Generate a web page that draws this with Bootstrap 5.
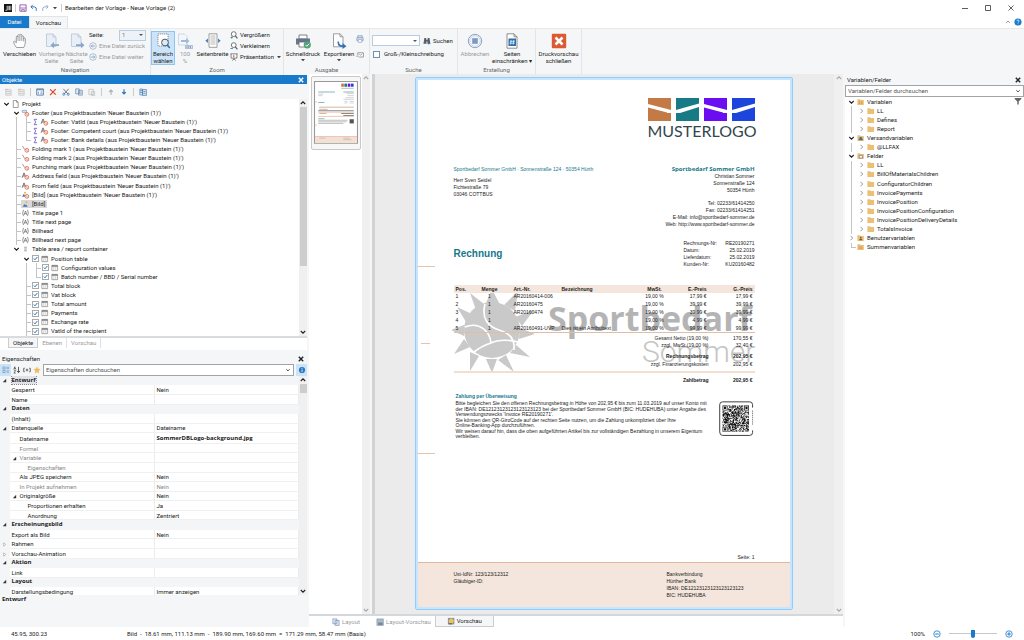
<!DOCTYPE html>
<html lang="de">
<head>
<meta charset="utf-8">
<meta name="viewport" content="width=device-width, initial-scale=1">
<title>Bearbeiten der Vorlage - Neue Vorlage (2)</title>
<link href="https://cdn.jsdelivr.net/npm/bootstrap@5.3.0/dist/css/bootstrap.min.css" rel="stylesheet">
<style>
:root{--ui:#f4f6f8;--blue:#1979ca;--line:#d5d8db;--ink:#222;--dim:#9a9a9a;--teal:#16788c;--peach:#f4e6dc}
body{font-family:Roboto,"Noto Sans",sans-serif;font-size:6px;line-height:8px;color:var(--ink);background:var(--ui)}
svg{display:block;flex:none}
i{font-style:normal}
.ic{width:8px;height:8px}
.cw{width:6px;height:6px}
button{color:inherit}
.plain{border:0;background:none;padding:0;color:inherit;text-decoration:none}
.g2{gap:2px}
.g3{gap:3px}
/* title bar and tabs */
.titlebar{height:16px;background:#fff;padding-left:4px}
.winctl{gap:17px;padding-right:10px}
.vbar{width:1px;height:8px;background:#ccc}
.tabrow{height:12px;background:#fff}
.tab-file{background:var(--blue);color:#fff;width:29px}
.tab-view{background:var(--ui);border:1px solid #e2e4e6;border-bottom:0;width:39px}
/* ribbon */
.ribbon{height:46px;border-top:1px solid #e6e8ea}
.rgroup{border-right:1px solid #e2e4e6;height:46px}
.rbody{height:37px;padding-top:2px}
.rname{color:#666;text-align:center;line-height:8px}
.rbtn{display:flex;flex-direction:column;align-items:center;border:1px solid transparent;background:none;padding:1px 0 0;height:34px;white-space:nowrap;border-radius:0}
.rbtn svg{width:16px;height:16px;margin-bottom:1px}
.rbtn svg.cw{width:6px;height:6px;margin:0}
.rbtn span{line-height:7px}
.rbtn:disabled{color:var(--dim)}
.rbtn.on{background:#cce4f9;border-color:#90c4ee}
.rlist{display:flex;flex-direction:column;gap:3px}
.rlist button,.rlist div{height:8px;display:flex;align-items:center;gap:2px;white-space:nowrap}
.off{color:var(--dim)}
.combo{appearance:none;border:1px solid #b8cde0;background:#fff url("data:image/svg+xml,%3Csvg xmlns='http://www.w3.org/2000/svg' width='6' height='4'%3E%3Cpath d='M1 1h4L3 3z' fill='%23555'/%3E%3C/svg%3E") no-repeat right 1px center;font-size:6px;line-height:8px;padding:0 2px;height:11px;border-radius:0;color:var(--ink)}
.combo:disabled{background-color:#edf2f8;color:#777;opacity:1}
.tick{appearance:none;width:7px;height:7px;margin:0 1px;border:1px solid #6d8fb0;background:#fff;flex:none}
.tree .tick{border-color:#aaa}
.tick:checked{background:#fff url("data:image/svg+xml,%3Csvg xmlns='http://www.w3.org/2000/svg' viewBox='0 0 5 5'%3E%3Cpath d='M.8 2.5l1.2 1.3L4.3 1' fill='none' stroke='%231979ca'/%3E%3C/svg%3E")}
/* docked panels */
.left{width:307px;margin-right:2px}
.right{width:179px;margin-left:2px}
.phead{height:11px;padding:0 2px}
.phead.act{background:var(--blue);color:#fff;margin-top:1px;height:9px}
.tools{height:15px;padding-left:4px;gap:5px}
.sbar{width:8px;background:#f0f0f0;display:flex;flex-direction:column;align-items:center;flex:none}
.sbar svg{width:8px;height:8px}
.sbar.pale{color:#aaa}
.thumb-h{width:7px;background:#cdcdcd}
.tree{margin:0;padding:0 0 0 1px;list-style:none;display:grid;grid-auto-rows:1fr}
.tree li{display:flex;align-items:stretch;white-space:nowrap}
.tree li>*{align-self:center}
.tree li>i{width:10px;align-self:stretch;position:relative;display:flex;align-items:center;justify-content:center}
.tree .v::before,.tree .t::before,.tree .e::before{content:"";position:absolute;left:5px;top:0;bottom:0;border-left:1px solid #c4c4c4}
.tree .e::before{bottom:50%}
.tree .t::after,.tree .e::after{content:"";position:absolute;left:5px;right:0;top:50%;border-top:1px solid #c4c4c4}
.tree .ic{width:9px;height:8px}
.tree span{padding:0 1px;margin-left:1px}
.tree .sel{background:#d9d9d9}
.ptabs{height:14px;background:#fff;border-top:2px solid #d9dcdf;padding-left:8px;padding-bottom:2px}
.ptabs button{border-right:1px solid #bbb;padding:0 4px;color:var(--dim)}
.ptabs button.on{background:var(--ui);color:var(--ink);border:1px solid #c9ccd0;border-top:0}
.find{border:1px solid #a0a4a8;background:#fff;height:12px;padding:0 2px}
.find input{border:0;outline:0;padding:0;min-width:0;font-size:6px;line-height:8px;background:none}
.find input::placeholder{color:#555}
.hot{background:#cce4f9}
.props{height:221px;border-collapse:collapse;background:#fff;table-layout:fixed}
.props th,.props td{padding:0 0 0 2px;font-weight:400;line-height:7px;border-bottom:1px solid #f0f0f0;border-right:1px solid #ececec;white-space:nowrap}
.props th:first-child,.props tr.cat th{background:#f3f5f7;border-color:#f3f5f7;font-weight:700}
.props svg{width:5px;height:5px;display:inline-block;vertical-align:middle}
.props b,.props .cat th,.heavy{font-family:"Open Sans",sans-serif}
.cur{outline:1px dotted #888;background:#dfe3e8}
.in1{padding-left:10px!important}.in2{padding-left:18px!important}
.neg{margin-left:-8px;margin-right:3px}
.gray{color:#888}
/* preview */
.strip{width:53px;background:#fff}
.tcard{border:1px solid #c8c8c8;border-radius:2px;background:#f7f7f7;margin:2px 1px 0 2px;padding:4px 2px 5px}
.canvas{background:#ebebeb;padding:3px 2px 4px 0;border-left:3px solid #d2d2d2}
.paper{width:378px;background:#fff;border:1px solid #8fccff;box-shadow:inset 0 0 0 2px #c6e5ff;border-radius:2px;padding:2px;position:relative;font:5px/7px "Liberation Sans",sans-serif;color:#222;display:flex;flex-direction:column}
.pin{padding:0 35px 0 36px;position:relative}
.brand{width:107px}
.brand b{display:block;font:400 16px/16px Lato,sans-serif;color:#33474d;margin-top:2px}
.teal{color:var(--teal)}
.h-inv{font-size:10px;line-height:12px;color:var(--teal);font-weight:700}
.co{font:700 6px/8px "Open Sans",sans-serif;color:var(--teal)}
.pos{width:100%;height:48px;table-layout:fixed;border-bottom:1px solid #e0bda4}
.pos th{background:var(--peach);height:8px}
.pos th,.pos td{padding:0 2px;line-height:7px;white-space:nowrap}
.sum td{padding:0 2px;line-height:7px;text-align:right}
.sum .gap td{padding-top:4px}
.sum .last td{padding:1px 2px 3px}
.water{position:absolute;left:34px;top:210px;width:306px;height:90px}
.foldmark{position:absolute;height:1px;background:#e8c3aa;left:1px;width:18px}
.pay{display:grid;grid-auto-rows:1fr;height:39px;width:254px;line-height:5px;white-space:nowrap}
.pfoot{background:var(--peach);border-top:1px solid #e0b79b;height:45px;padding:8px 35px 0 36px;margin-top:1px}
.dtabs{height:13px;background:#fff;border-top:2px solid #d5d8db}
.dtabs button{display:flex;align-items:center;gap:2px;color:var(--dim)}
.dtabs button.on{background:var(--ui);border:1px solid #c9ccd0;border-top:0;color:var(--ink);width:59px;justify-content:center}
.status{height:13px;background:#fff}
.zoomer{appearance:none;width:48px;height:8px;background:linear-gradient(#c8c8c8,#c8c8c8) center/100% 1px no-repeat}
.zoomer::-webkit-slider-thumb{appearance:none;width:4px;height:8px;background:var(--blue);border-radius:0 0 2px 2px}
</style>
</head>
<body class="vh-100 d-flex flex-column overflow-hidden">
<svg width="0" height="0" class="position-absolute" aria-hidden="true">
<defs>
<symbol id="x" viewBox="0 0 8 8"><path d="M1.8 1.8l4.4 4.4M6.2 1.8L1.8 6.2" stroke="currentColor" stroke-width="1.4"/></symbol>
<symbol id="dn" viewBox="0 0 8 8"><path d="M1.8 3L4 5.2 6.200 3" fill="none" stroke="currentColor" stroke-width="1.1"/></symbol>
<symbol id="up" viewBox="0 0 8 8"><path d="M1.800 5L4 2.800 6.200 5" fill="none" stroke="currentColor" stroke-width="1.1"/></symbol>
<symbol id="rt" viewBox="0 0 8 8"><path d="M3 1.800L5.200 4 3 6.200" fill="none" stroke="#999" stroke-width="1"/></symbol>
<symbol id="tri" viewBox="0 0 6 6"><path d="M5 1v4H1z" fill="#333"/></symbol>
<symbol id="tro" viewBox="0 0 6 6"><path d="M2 1l2.500 2L2 5z" fill="#fff" stroke="#999" stroke-width=".7"/></symbol>
<symbol id="car" viewBox="0 0 6 6"><path d="M1 2h4L3 4.300z" fill="#444"/></symbol>
<symbol id="page" viewBox="0 0 9 9"><path d="M2 .5h3.500l2 2v6H2zM5.500.5v2h2" fill="#fff" stroke="#777" stroke-width=".8"/></symbol>
<symbol id="foot" viewBox="0 0 9 9"><path d="M.8 3.800V1.500h5v2.300z" fill="#dbe8f5" stroke="#6a93c0" stroke-width=".7"/><circle cx="6" cy="6" r="2.100" fill="#fff" stroke="#dc5a3c" stroke-width=".9"/><path d="M4.600 4.600l2.800 2.800" stroke="#dc5a3c" stroke-width=".8"/></symbol>
<symbol id="lnk" viewBox="0 0 9 9"><path d="M1 1l2.500 4" stroke="#777" stroke-width=".8"/><circle cx="6" cy="6" r="2.100" fill="#fff" stroke="#dc5a3c" stroke-width=".9"/><path d="M4.600 4.600l2.800 2.800" stroke="#dc5a3c" stroke-width=".8"/></symbol>
<symbol id="txt" viewBox="0 0 9 9"><path d="M.7 6.500L2.800 1l1.700 4M1.600 4.500h2.400" fill="none" stroke="#444" stroke-width=".8"/><circle cx="6" cy="6" r="2.100" fill="#fff" stroke="#dc5a3c" stroke-width=".9"/><path d="M4.600 4.600l2.800 2.800" stroke="#dc5a3c" stroke-width=".8"/></symbol>
<symbol id="pic" viewBox="0 0 9 9"><circle cx="5.500" cy="2.500" r="1.200" fill="#f2b33d"/><path d="M1.500 7.500l1.700-3 1.300 1.500.8-.8 1.700 2.300z" fill="#3d78bd"/></symbol>
<symbol id="picl" viewBox="0 0 9 9"><circle cx="4" cy="2" r="1.200" fill="#f2b33d"/><path d="M.6 6.500l2-3.500 2 3.500z" fill="#3d78bd"/><circle cx="6" cy="6" r="2.100" fill="#fff" stroke="#dc5a3c" stroke-width=".9"/><path d="M4.600 4.600l2.800 2.800" stroke="#dc5a3c" stroke-width=".8"/></symbol>
<symbol id="sum" viewBox="0 0 9 9"><path d="M6.300 1.500H3L4.700 4.500 3 7.500h3.300" fill="none" stroke="#6d62c9" stroke-width="1"/></symbol>
<symbol id="cond" viewBox="0 0 9 9"><path d="M2.300 1Q.3 4.500 2.300 8M6.700 1q2 3.500 0 7M2.900 6.700l1.600-4.400 1.600 4.400M3.500 5.300h2" fill="none" stroke="#555" stroke-width=".7"/></symbol>
<symbol id="rep" viewBox="0 0 9 9"><path d="M3 2.500h3M3 4.500h3M3 6.500h3" stroke="#888" stroke-width=".9"/></symbol>
<symbol id="tab" viewBox="0 0 9 9"><path d="M1.500 1.500h6.500v6H1.500z" fill="#fff" stroke="#888" stroke-width=".8"/><path d="M1.500 2.300h6.500" stroke="#777" stroke-width="1.600"/><path d="M3.700 2.500v5M5.900 2.500v5" stroke="#aaa" stroke-width=".6"/></symbol>
<symbol id="fold" viewBox="0 0 9 9"><path d="M1 1.500h3l.8.800H8.500V8H1z" fill="#ecbf77"/></symbol>
<symbol id="foldv" viewBox="0 0 9 9"><path d="M1 1.500h3l.8.800H8.200V7.800H1z" fill="#ecbf77"/><path d="M2.500 4.500h1.500M5 4.500h1.500M2.500 6h1.500M5 6h1.500" stroke="#c07f2c" stroke-width=".7"/></symbol>
<symbol id="foldm" viewBox="0 0 9 9"><path d="M1 1.500h3l.8.800H8.200V7.800H1z" fill="#ecbf77"/><path d="M2.500 5h4.500v2H2.500zM3.500 3.500h2.500V5H3.500z" fill="#526f93"/></symbol>
<symbol id="foldf" viewBox="0 0 9 9"><path d="M1 1.500h3l.8.800H8.200V7.800H1z" fill="#ecbf77"/><path d="M3 3.800h3.800v3H3z" fill="#fff" stroke="#5b6d80" stroke-width=".7"/></symbol>
<symbol id="foldu" viewBox="0 0 9 9"><path d="M1 1.500h3l.8.800H8.200V7.800H1z" fill="#ecbf77"/><circle cx="4.800" cy="4" r=".9" fill="#6b5a45"/><path d="M3.200 7c0-2.500 3.200-2.500 3.200 0z" fill="#6b5a45"/></symbol>
<symbol id="hand" viewBox="0 0 16 16"><path d="M4.500 14.500C3 12.500 1.500 10 1.700 8.600c1-.9 2 .2 2.600 1.300V4c0-1.200 1.700-1.200 1.700 0V2.600c0-1.300 1.900-1.300 1.900 0V2c.2-1.100 1.800-1 1.900.2V3.500c.3-1 1.800-.9 1.900.3v1.800c.4-.8 1.700-.6 1.700.5 0 4.500-.3 6-1.700 8.400zM6 4v4M7.900 3v5M9.800 3.500V8M11.700 5v3.500" fill="#fff" stroke="#777" stroke-width=".7"/></symbol>
<symbol id="pgp" viewBox="0 0 16 16"><path d="M2.500 1h6.500l3 3v9.500h-9.500z" fill="#e9eff7" stroke="#b4c4d8" stroke-width=".8"/><path d="M9 1v3h3" fill="none" stroke="#b4c4d8" stroke-width=".8"/><path d="M15 11.300h-5V9L6.500 12.200 10 15.300v-2.200h5z" fill="#8aa6ca"/></symbol>
<symbol id="pgn" viewBox="0 0 16 16"><path d="M2.500 1h6.500l3 3v9.500h-9.500z" fill="#e9eff7" stroke="#b4c4d8" stroke-width=".8"/><path d="M9 1v3h3" fill="none" stroke="#b4c4d8" stroke-width=".8"/><path d="M7 11.300h5V9l3.500 3.200L12 15.300v-2.200H7z" fill="#8aa6ca"/></symbol>
<symbol id="cl" viewBox="0 0 8 8"><circle cx="4" cy="4" r="3.300" fill="#f3f6fa" stroke="#94a9c4" stroke-width=".7"/><path d="M6 4H2.300M3.700 2.500L2.200 4l1.500 1.500" fill="none" stroke="#7f9bc0" stroke-width=".8"/></symbol>
<symbol id="cr" viewBox="0 0 8 8"><circle cx="4" cy="4" r="3.300" fill="#f3f6fa" stroke="#94a9c4" stroke-width=".7"/><path d="M2 4h3.700M4.300 2.500L5.800 4 4.300 5.500" fill="none" stroke="#7f9bc0" stroke-width=".8"/></symbol>
<symbol id="area" viewBox="0 0 16 16"><path d="M3 1h10v12H3z" fill="#fff" stroke="#666" stroke-width=".7" stroke-dasharray="1.200 .8"/><circle cx="10" cy="9.500" r="3.400" fill="#d9ecfb" stroke="#555" stroke-width="1"/><path d="M12.300 12l2.500 3" stroke="#3c6ea8" stroke-width="1.500"/></symbol>
<symbol id="z100" viewBox="0 0 16 16"><path d="M1.500 1h6l3 3v8h-9z" fill="#f3f7fb" stroke="#b4c4d8" stroke-width=".8" stroke-dasharray="1.500 .6"/><path d="M4 7h5V5l3.500 3L9 11V9H4z" fill="#a3bbd9"/><path d="M8.500 12.500h7v3h-7z" fill="#dfe8f2" stroke="#8aa0bf" stroke-width=".6"/><path d="M9.500 14h5" stroke="#6d83a8" stroke-width="1.300" stroke-dasharray="1 .8"/></symbol>
<symbol id="pgw" viewBox="0 0 16 16"><path d="M4 .8h8v13.500H4z" fill="#fff" stroke="#888" stroke-width=".8"/><path d="M5.500 3h5M5.500 5h5M5.500 7h5M5.500 9h5M5.500 11h5" stroke="#999" stroke-width=".7"/><path d="M3 5.500L.3 7.700 3 10zM13 5.500l2.700 2.200L13 10z" fill="#4a82c0"/></symbol>
<symbol id="mag" viewBox="0 0 9 9"><circle cx="4.200" cy="3.500" r="2.700" fill="#fff" stroke="#555" stroke-width=".9"/><path d="M6 5.500l2.300 2.800" stroke="#555" stroke-width="1.200"/><path d="M.5 7.300h2.800M1.900 6v2.700" stroke="#3a9a5c" stroke-width=".9"/></symbol>
<symbol id="mag2" viewBox="0 0 9 9"><circle cx="4.200" cy="3.500" r="2.700" fill="#fff" stroke="#555" stroke-width=".9"/><path d="M6 5.500l2.300 2.800" stroke="#555" stroke-width="1.200"/><path d="M.5 7.300h2.800" stroke="#3a78bd" stroke-width="1"/></symbol>
<symbol id="prs" viewBox="0 0 9 9"><path d="M.5 1h8M1.200 1v4.700h6.600V1M4.500 5.700v1.200M2.500 8.500l2-1.700 2 1.700" fill="#fff" stroke="#555" stroke-width=".8"/><path d="M3.500 2.200l2.200 1.200-2.200 1.300z" fill="#d2553d"/></symbol>
<symbol id="prn" viewBox="0 0 16 16"><path d="M4 2h8v4H4z" fill="#fff" stroke="#666" stroke-width=".8"/><path d="M1 5.500h14v6H1z" fill="#70767e"/><path d="M4 9h8v5H4z" fill="#fff" stroke="#666" stroke-width=".8"/><path d="M2.500 7h11" stroke="#3f76b4"/><circle cx="12.300" cy="11.800" r="3.600" fill="#54a078"/><path d="M10.500 11.900l1.400 1.400 2.400-2.700" fill="none" stroke="#fff"/></symbol>
<symbol id="exp" viewBox="0 0 16 16"><path d="M2.500.8h6.500l3 3v10h-9.500zM9 .8v3h3" fill="#fff" stroke="#888" stroke-width=".8"/><path d="M8 8.500c0 2.700 1 3.700 3.500 3.700V10l4 3.200-4 2.800v-2c-3.500 0-5-1.500-5-5.500z" fill="#3872b5"/></symbol>
<symbol id="prs2" viewBox="0 0 9 9"><path d="M2 3V.8h5V3M1 3h7v3.500H1z" fill="#dbe4ee" stroke="#7f97b8" stroke-width=".8"/><path d="M2.500 5h4v3.200h-4z" fill="#fff" stroke="#7f97b8" stroke-width=".7"/></symbol>
<symbol id="snd" viewBox="0 0 9 9"><path d="M2 2h6.300v4.800H3.500M2 2v2.500" fill="#fff" stroke="#777" stroke-width=".8"/><path d="M3.500 3.500l1.700 1.200 1.700-1.200M.3 5.800h3" fill="none" stroke="#777" stroke-width=".7"/></symbol>
<symbol id="bino" viewBox="0 0 9 9"><path d="M1.500 1.200h2l.5 6.300H.5zM5.300 1.200h2l1 6.300H4.800zM3.500 3h2v2h-2z" fill="#5a5f66"/><path d="M6 5.500l2.500 1.500L6 8.700z" fill="#3a78bd"/></symbol>
<symbol id="stop" viewBox="0 0 16 16"><circle cx="8" cy="8" r="6.700" fill="#f2f5f9" stroke="#8ba3c4" stroke-width="1"/><circle cx="8" cy="8" r="5.300" fill="none" stroke="#c3d0e0" stroke-width=".8"/><path d="M5.200 5.200h5.600v5.600H5.200z" fill="#7d99c2"/></symbol>
<symbol id="num" viewBox="0 0 16 16"><path d="M3 .8h7l3 3v11.400H3zM10 .8v3h3" fill="#fff" stroke="#777" stroke-width=".8"/><path d="M4.500 5.500h7.500v7.500H4.500z" fill="#2f6fad"/><path d="M7.200 7l-.6 4.500M9.800 7l-.6 4.500M5.800 8.300h5M5.600 10.200h5" stroke="#fff" stroke-width=".7"/></symbol>
<symbol id="close" viewBox="0 0 16 16"><rect x=".8" y=".8" width="14.400" height="14.400" rx="1" fill="#dc5a32"/><path d="M4.500 4.500l7 7M11.500 4.500l-7 7" stroke="#fff" stroke-width="2.600"/></symbol>
<symbol id="logo" viewBox="0 0 9 9"><path d="M0 0h9v9H0z" fill="#111"/><path d="M1.500 7h2V2M4.700 2v5M6.200 2v5M7.700 2v5" fill="none" stroke="#fff" stroke-width=".8"/></symbol>
<symbol id="save" viewBox="0 0 9 9"><path d="M1 1h7v7.200H1z" fill="#fff" stroke="#8d54a8" stroke-width="1"/><path d="M1 4.500h7M3 8V6.300h3V8" fill="none" stroke="#8d54a8" stroke-width=".9"/></symbol>
<symbol id="undo" viewBox="0 0 9 9"><path d="M3 1L1 3.300l2.200 2M1.300 3.200H5q3 .3 2 4.500" fill="none" stroke="#3a72b8" stroke-width="1.100"/></symbol>
<symbol id="redo" viewBox="0 0 9 9"><path d="M6 1l2 2.300-2.200 2M7.700 3.200H4Q1 3.500 2 7.700" fill="none" stroke="#92aece" stroke-width="1.100"/></symbol>
<symbol id="gri" viewBox="0 0 9 9"><path d="M2 2h6v6H2z" fill="#f5f5f5" stroke="#bbb" stroke-width=".8"/><path d="M2.500 4h5M2.500 6h5M1 1.500h4" stroke="#bbb" stroke-width=".8"/></symbol>
<symbol id="prop" viewBox="0 0 9 9"><path d="M.8 1h7.500v7H.8z" fill="#fff" stroke="#4a6f99" stroke-width=".9"/><path d="M1 2h7" stroke="#4a6f99"/><path d="M2.500 4v3M5 4.500h2.200M5 6.500h2.200" stroke="#4a82c0" stroke-width=".9"/></symbol>
<symbol id="del" viewBox="0 0 9 9"><path d="M1.200 1.500l6.500 6M7.500 1.200L1.200 8" stroke="#df4526" stroke-width="1.400"/></symbol>
<symbol id="cut" viewBox="0 0 9 9"><path d="M1.500 1l5 5.500M7.500 1l-5 5.500" stroke="#555" stroke-width=".9"/><circle cx="2" cy="7" r="1.200" fill="none" stroke="#3a78bd" stroke-width=".9"/><circle cx="7" cy="7" r="1.200" fill="none" stroke="#3a78bd" stroke-width=".9"/></symbol>
<symbol id="copy" viewBox="0 0 9 9"><path d="M.8 1h4v5.500h-4zM4 2.500h4.200V8H4z" fill="#e4edf6" stroke="#6584a8" stroke-width=".8"/><path d="M5 4.500h2.200M5 6h2.200" stroke="#6584a8" stroke-width=".6"/></symbol>
<symbol id="sync" viewBox="0 0 9 9"><path d="M1 1.200h3v6.600H1zM4 1.800h4.300v6.500H4z" fill="#e4edf6" stroke="#4a7cb0" stroke-width=".8"/><path d="M5 4h2.300M5 6h2.300M1.500 3h2M1.500 5h2" stroke="#3a78bd" stroke-width=".8"/></symbol>
<symbol id="paste" viewBox="0 0 9 9"><path d="M1 1.500h5v6H1zM4 4h3.500v4.300H4z" fill="#f3f3f3" stroke="#bbb" stroke-width=".8"/></symbol>
<symbol id="aup" viewBox="0 0 9 9"><path d="M4.500 7.500V3M2.500 4.300l2-2 2 2" fill="none" stroke="#aaa" stroke-width="1.200"/></symbol>
<symbol id="adn" viewBox="0 0 9 9"><path d="M4.500 1.500V6M2.500 4.700l2 2 2-2" fill="none" stroke="#2c72b8" stroke-width="1.300"/></symbol>
<symbol id="star" viewBox="0 0 9 9"><path d="M4.500.5l1.200 2.700 2.900.3-2.200 2 .6 2.900-2.500-1.500L2 8.400l.6-2.900-2.200-2 2.900-.3z" fill="#f0bb5a"/></symbol>
<symbol id="cat" viewBox="0 0 9 9"><path d="M1 1h2.500v2.500H1zM1 5h2.500v2.500H1zM5 1.500h3M5 3h3M5 5.500h3M5 7h3" fill="none" stroke="#6f8dac" stroke-width=".7"/></symbol>
<symbol id="az" viewBox="0 0 9 9"><path d="M.8 4l1.200-3.200L3.200 4M1.200 3h1.600M1 5.200h2L1 8h2.200" fill="none" stroke="#333" stroke-width=".7"/><path d="M6.200 1v6M4.500 5.500l1.700 2 1.700-2" fill="none" stroke="#333" stroke-width=".9"/></symbol>
<symbol id="plus" viewBox="0 0 9 9"><path d="M2 2.500H.8v4H2M7 2.500h1.200v4H7M4.500 3v3M3 4.500h3" fill="none" stroke="#333" stroke-width=".8"/></symbol>
<symbol id="info" viewBox="0 0 9 9"><circle cx="4.500" cy="4.500" r="3.500" fill="#2d78be"/><path d="M4.500 4v2.800M4.500 2.200v1" stroke="#fff" stroke-width=".9"/></symbol>
<symbol id="help" viewBox="0 0 9 9"><circle cx="4.500" cy="4.500" r="4" fill="#1979ca"/><path d="M3.200 3.500q.1-1.300 1.300-1.300t1.300 1.100q0 .7-.8 1.100t-.5.900M4.500 6.100v.8" fill="none" stroke="#fff" stroke-width=".8"/></symbol>
<symbol id="fil" viewBox="0 0 9 9"><path d="M.8 1h7.400v1.200L5.300 5v3.500H3.700V5L.8 2.200z" fill="#666"/></symbol>
<symbol id="lay" viewBox="0 0 9 9"><path d="M1 1h4.500v5.500H1zM3.500 2.800H8v5.500H3.500z" fill="#e3edf8" stroke="#7b93b3" stroke-width=".8"/></symbol>
<symbol id="sv" viewBox="0 0 9 9"><path d="M1 1h7.300v7.300H1z" fill="#a9bccd" stroke="#7a8b9c" stroke-width=".6"/><path d="M2.500 5h5v3h-5z" fill="#7c8792"/></symbol>
<symbol id="sva" viewBox="0 0 9 9"><path d="M1 1h7.300v7.300H1z" fill="#8796a3"/><path d="M2 3.500L5 1.500l3 2.500-2 4-3.500-.8z" fill="#efc34e"/><path d="M2 7h4v1.300H2z" fill="#55616c"/></symbol>
<symbol id="zm" viewBox="0 0 9 9"><circle cx="4.500" cy="4.500" r="3.600" fill="#fff" stroke="#1979ca" stroke-width=".9"/><path d="M2.500 4.500h4" stroke="#1979ca" stroke-width="1.100"/></symbol>
<symbol id="zp" viewBox="0 0 9 9"><circle cx="4.500" cy="4.500" r="3.600" fill="#fff" stroke="#1979ca" stroke-width=".9"/><path d="M2.500 4.500h4M4.500 2.500v4" stroke="#1979ca" stroke-width="1.100"/></symbol>
<symbol id="mark" viewBox="0 0 107 23"><path d="M0 0h23v12L0 6z" fill="#c47a45"/><path d="M0 9.500L19 14.500V15h4v8H0z" fill="#c47a45"/><path d="M28 0h23v5.500l-23 6.500z" fill="#177a84"/><path d="M28 15h4l19-6v14H28z" fill="#177a84"/><path d="M56 0h23v12L56 6z" fill="#6a0df0"/><path d="M56 9.500l19 5V15h4v8H56z" fill="#6a0df0"/><path d="M84 0h23v5.500L84 12z" fill="#1c45dc"/><path d="M84 15h4l19-6v14H84z" fill="#1c45dc"/></symbol>
</defs>
</svg>

<header>
<div class="titlebar d-flex align-items-center g3">
  <svg class="ic"><use href="#logo"/></svg><i class="vbar"></i>
  <button class="plain" aria-label="Speichern"><svg class="ic"><use href="#save"/></svg></button>
  <button class="plain" aria-label="Rückgängig"><svg class="ic"><use href="#undo"/></svg></button>
  <button class="plain" aria-label="Wiederholen"><svg class="ic"><use href="#redo"/></svg></button>
  <button class="plain" aria-label="Mehr"><svg class="cw"><use href="#car"/></svg></button>
  <i class="vbar"></i><span>Bearbeiten der Vorlage - Neue Vorlage (2)</span>
  <div class="winctl ms-auto d-flex">
    <button class="plain" aria-label="Minimieren"><svg class="cw" viewBox="0 0 6 6"><path d="M0 3.500h6" stroke="#333" stroke-width=".8"/></svg></button>
    <button class="plain" aria-label="Maximieren"><svg class="cw" viewBox="0 0 6 6"><path d="M.5.500h5v5h-5z" fill="none" stroke="#333" stroke-width=".8"/></svg></button>
    <button class="plain" aria-label="Schließen"><svg class="cw" viewBox="0 0 6 6"><path d="M.5.500l5 5M5.500.500l-5 5" stroke="#333" stroke-width=".8"/></svg></button>
  </div>
</div>
<nav class="tabrow d-flex align-items-stretch">
  <button class="plain tab-file text-white">Datei</button><button class="plain tab-view">Vorschau</button>
  <div class="ms-auto d-flex align-items-center g3" style="padding-right:2px"><svg class="cw text-secondary"><use href="#up"/></svg><a href="#hilfe" aria-label="Hilfe"><svg class="ic"><use href="#help"/></svg></a></div>
</nav>
<div class="ribbon d-flex">
  <section class="rgroup" style="width:151px"><div class="rbody d-flex">
    <button class="rbtn" style="width:39px"><svg><use href="#hand"/></svg><span>Verschieben</span></button>
    <button class="rbtn" style="width:25px" disabled><svg><use href="#pgp"/></svg><span>Vorherige<br>Seite</span></button>
    <button class="rbtn" style="width:25px" disabled><svg><use href="#pgn"/></svg><span>Nächste<br>Seite</span></button>
    <div class="rlist flex-fill">
      <div class="justify-content-between pe-1"><label for="pg">Seite:</label><select id="pg" class="combo" style="width:27px" disabled><option>1</option></select></div>
      <button class="plain off" disabled><svg class="ic"><use href="#cl"/></svg>Eine Datei zurück</button>
      <button class="plain off" disabled><svg class="ic"><use href="#cr"/></svg>Eine Datei weiter</button>
    </div></div><div class="rname">Navigation</div></section>
  <section class="rgroup" style="width:133px"><div class="rbody d-flex">
    <button class="rbtn on" style="width:24px"><svg><use href="#area"/></svg><span>Bereich<br>wählen</span></button>
    <button class="rbtn" style="width:20px" disabled><svg><use href="#z100"/></svg><span>100<br>%</span></button>
    <button class="rbtn" style="width:35px"><svg><use href="#pgw"/></svg><span>Seitenbreite</span></button>
    <div class="rlist">
      <button class="plain"><svg class="ic"><use href="#mag"/></svg>Vergrößern</button>
      <button class="plain"><svg class="ic"><use href="#mag2"/></svg>Verkleinern</button>
      <button class="plain"><svg class="ic"><use href="#prs"/></svg>Präsentation<svg class="cw"><use href="#car"/></svg></button>
    </div></div><div class="rname">Zoom</div></section>
  <section class="rgroup" style="width:86px"><div class="rbody d-flex">
    <button class="rbtn" style="width:38px"><svg><use href="#prn"/></svg><span>Schnelldruck</span><svg class="cw"><use href="#car"/></svg></button>
    <button class="rbtn" style="width:34px"><svg><use href="#exp"/></svg><span>Exportieren</span><svg class="cw"><use href="#car"/></svg></button>
    <div class="d-flex flex-column gap-2 pt-1">
      <button class="plain" aria-label="Drucken"><svg class="ic"><use href="#prs2"/></svg></button>
      <button class="plain" aria-label="Senden"><svg class="ic"><use href="#snd"/></svg></button>
    </div></div><div class="rname">Ausgabe</div></section>
  <section class="rgroup" style="width:88px"><div class="rbody" style="padding-left:2px">
    <div class="d-flex align-items-center g3 pt-1"><select class="combo" style="width:48px" aria-label="Suchbegriff"><option></option></select><button class="plain d-flex g2"><svg class="ic"><use href="#bino"/></svg>Suchen</button></div>
    <div class="d-flex align-items-center g3 pt-1"><input class="tick" type="checkbox" id="cs"><label for="cs" class="text-nowrap">Groß-/Kleinschreibung</label></div>
    </div><div class="rname">Suche</div></section>
  <section class="rgroup" style="width:78px"><div class="rbody d-flex">
    <button class="rbtn" style="width:34px" disabled><svg><use href="#stop"/></svg><span>Abbrechen</span></button>
    <button class="rbtn" style="width:40px"><svg><use href="#num"/></svg><span>Seiten<br>einschränken ▾</span></button>
    </div><div class="rname">Erstellung</div></section>
  <section class="rgroup" style="width:46px"><div class="rbody">
    <button class="rbtn w-100"><svg><use href="#close"/></svg><span>Druckvorschau<br>schließen</span></button></div></section>
</div>
</header>

<main class="d-flex flex-fill overflow-hidden">
<aside class="left d-flex flex-column flex-shrink-0">
  <div class="phead act d-flex align-items-center justify-content-between"><span>Objekte</span><button class="plain" aria-label="Objekte schließen"><svg class="ic"><use href="#x"/></svg></button></div>
  <div class="tools d-flex align-items-center">
    <svg class="ic"><use href="#gri"/></svg><svg class="ic"><use href="#gri"/></svg><i class="vbar"></i>
    <svg class="ic"><use href="#prop"/></svg><svg class="ic"><use href="#del"/></svg><svg class="ic"><use href="#cut"/></svg><svg class="ic"><use href="#copy"/></svg><svg class="ic"><use href="#paste"/></svg><i class="vbar"></i>
    <svg class="ic"><use href="#aup"/></svg><svg class="ic"><use href="#adn"/></svg><i class="vbar"></i><svg class="ic"><use href="#sync"/></svg>
  </div>
  <div class="d-flex flex-fill bg-white">
    <ul class="tree flex-fill">
      <li><i><svg class="ic"><use href="#dn"/></svg></i><svg class="ic"><use href="#page"/></svg><span>Projekt</span></li>
      <li><i></i><i><svg class="ic"><use href="#dn"/></svg></i><svg class="ic"><use href="#foot"/></svg><span>Footer (aus Projektbaustein 'Neuer Baustein (1)')</span></li>
      <li><i></i><i class="v"></i><i class="t"></i><svg class="ic"><use href="#sum"/></svg><svg class="ic"><use href="#txt"/></svg><span>Footer: VatId (aus Projektbaustein 'Neuer Baustein (1)')</span></li>
      <li><i></i><i class="v"></i><i class="t"></i><svg class="ic"><use href="#sum"/></svg><svg class="ic"><use href="#txt"/></svg><span>Footer: Competent court (aus Projektbaustein 'Neuer Baustein (1)')</span></li>
      <li><i></i><i class="v"></i><i class="e"></i><svg class="ic"><use href="#sum"/></svg><svg class="ic"><use href="#txt"/></svg><span>Footer: Bank details (aus Projektbaustein 'Neuer Baustein (1)')</span></li>
      <li><i></i><i class="t"></i><svg class="ic"><use href="#lnk"/></svg><span>Folding mark 1 (aus Projektbaustein 'Neuer Baustein (1)')</span></li>
      <li><i></i><i class="t"></i><svg class="ic"><use href="#lnk"/></svg><span>Folding mark 2 (aus Projektbaustein 'Neuer Baustein (1)')</span></li>
      <li><i></i><i class="t"></i><svg class="ic"><use href="#lnk"/></svg><span>Punching mark (aus Projektbaustein 'Neuer Baustein (1)')</span></li>
      <li><i></i><i class="t"></i><svg class="ic"><use href="#txt"/></svg><span>Address field (aus Projektbaustein 'Neuer Baustein (1)')</span></li>
      <li><i></i><i class="t"></i><svg class="ic"><use href="#txt"/></svg><span>From field (aus Projektbaustein 'Neuer Baustein (1)')</span></li>
      <li><i></i><i class="t"></i><svg class="ic"><use href="#picl"/></svg><span>[Bild] (aus Projektbaustein 'Neuer Baustein (1)')</span></li>
      <li><i></i><i class="t"></i><svg class="ic sel"><use href="#pic"/></svg><span class="sel ms-0" style="padding:0 2px">[Bild]</span></li>
      <li><i></i><i class="t"></i><svg class="ic"><use href="#cond"/></svg><span>Title page 1</span></li>
      <li><i></i><i class="t"></i><svg class="ic"><use href="#cond"/></svg><span>Title next page</span></li>
      <li><i></i><i class="t"></i><svg class="ic"><use href="#cond"/></svg><span>Billhead</span></li>
      <li><i></i><i class="t"></i><svg class="ic"><use href="#cond"/></svg><span>Billhead next page</span></li>
      <li><i></i><i><svg class="ic"><use href="#dn"/></svg></i><svg class="ic"><use href="#rep"/></svg><span>Table area / report container</span></li>
      <li><i></i><i></i><i><svg class="ic"><use href="#dn"/></svg></i><input class="tick" type="checkbox" checked id="k1"><svg class="ic"><use href="#tab"/></svg><span><label for="k1">Position table</label></span></li>
      <li><i></i><i></i><i class="v"></i><i class="t"></i><input class="tick" type="checkbox" checked id="k2"><svg class="ic"><use href="#tab"/></svg><span><label for="k2">Configuration values</label></span></li>
      <li><i></i><i></i><i class="v"></i><i class="e"></i><input class="tick" type="checkbox" checked id="k3"><svg class="ic"><use href="#tab"/></svg><span><label for="k3">Batch number / BBD / Serial number</label></span></li>
      <li><i></i><i></i><i class="t"></i><input class="tick" type="checkbox" checked id="k4"><svg class="ic"><use href="#tab"/></svg><span><label for="k4">Total block</label></span></li>
      <li><i></i><i></i><i class="t"></i><input class="tick" type="checkbox" checked id="k5"><svg class="ic"><use href="#tab"/></svg><span><label for="k5">Vat block</label></span></li>
      <li><i></i><i></i><i class="t"></i><input class="tick" type="checkbox" checked id="k6"><svg class="ic"><use href="#tab"/></svg><span><label for="k6">Total amount</label></span></li>
      <li><i></i><i></i><i class="t"></i><input class="tick" type="checkbox" checked id="k7"><svg class="ic"><use href="#tab"/></svg><span><label for="k7">Payments</label></span></li>
      <li><i></i><i></i><i class="t"></i><input class="tick" type="checkbox" checked id="k8"><svg class="ic"><use href="#tab"/></svg><span><label for="k8">Exchange rate</label></span></li>
      <li><i></i><i></i><i class="t"></i><input class="tick" type="checkbox" checked id="k9"><svg class="ic"><use href="#tab"/></svg><span><label for="k9">VatId of the recipient</label></span></li>
    </ul>
    <div class="sbar"><svg><use href="#up"/></svg><i class="thumb-h" style="height:67%"></i><svg class="mt-auto"><use href="#dn"/></svg></div>
  </div>
  <div class="ptabs d-flex align-items-stretch"><button class="plain on px-1">Objekte</button><button class="plain px-1 border-end">Ebenen</button><button class="plain px-1 border-end">Vorschau</button></div>
  <div class="phead d-flex align-items-center justify-content-between" style="margin-top:3px"><span>Eigenschaften</span><button class="plain" aria-label="Eigenschaften schließen"><svg class="ic"><use href="#x"/></svg></button></div>
  <div class="d-flex align-items-center g2" style="height:12px">
    <button class="plain hot h-100" style="width:11px" aria-label="Kategorien"><svg class="ic mx-auto"><use href="#cat"/></svg></button>
    <svg class="ic"><use href="#az"/></svg><svg class="ic"><use href="#plus"/></svg><svg class="ic"><use href="#star"/></svg>
    <div class="find d-flex flex-fill align-items-center"><input class="flex-fill" placeholder="Eigenschaften durchsuchen" aria-label="Eigenschaften durchsuchen"><svg class="cw"><use href="#dn"/></svg></div>
    <button class="plain hot h-100" style="width:11px" aria-label="Info"><svg class="ic mx-auto"><use href="#info"/></svg></button>
  </div>
  <div class="d-flex overflow-hidden" style="height:219px">
    <table class="props flex-fill">
      <colgroup><col style="width:9px"><col style="width:145px"><col></colgroup>
      <tbody>
      <tr class="cat"><th><svg><use href="#tri"/></svg></th><th colspan="2"><span class="cur">Entwurf</span></th></tr>
      <tr><th></th><td>Gesperrt</td><td>Nein</td></tr>
      <tr><th></th><td>Name</td><td></td></tr>
      <tr class="cat"><th><svg><use href="#tri"/></svg></th><th colspan="2">Daten</th></tr>
      <tr><th></th><td>(Inhalt)</td><td></td></tr>
      <tr><th><svg><use href="#tri"/></svg></th><td>Datenquelle</td><td>Dateiname</td></tr>
      <tr><th></th><td class="in1">Dateiname</td><td><b>SommerDBLogo-background.jpg</b></td></tr>
      <tr><th></th><td class="in1 gray">Formel</td><td></td></tr>
      <tr><th></th><td class="in1 gray"><svg class="neg"><use href="#tri"/></svg>Variable</td><td></td></tr>
      <tr><th></th><td class="in2 gray">Eigenschaften</td><td></td></tr>
      <tr><th></th><td class="in1">Als JPEG speichern</td><td>Nein</td></tr>
      <tr><th></th><td class="in1 gray">In Projekt aufnehmen</td><td class="gray">Nein</td></tr>
      <tr><th></th><td class="in1"><svg class="neg"><use href="#tri"/></svg>Originalgröße</td><td>Nein</td></tr>
      <tr><th></th><td class="in2">Proportionen erhalten</td><td>Ja</td></tr>
      <tr><th></th><td class="in2">Anordnung</td><td>Zentriert</td></tr>
      <tr class="cat"><th><svg><use href="#tri"/></svg></th><th colspan="2">Erscheinungsbild</th></tr>
      <tr><th></th><td>Export als Bild</td><td>Nein</td></tr>
      <tr><th><svg><use href="#tro"/></svg></th><td>Rahmen</td><td></td></tr>
      <tr><th><svg><use href="#tro"/></svg></th><td>Vorschau-Animation</td><td></td></tr>
      <tr class="cat"><th><svg><use href="#tri"/></svg></th><th colspan="2">Aktion</th></tr>
      <tr><th></th><td>Link</td><td></td></tr>
      <tr class="cat"><th><svg><use href="#tri"/></svg></th><th colspan="2">Layout</th></tr>
      <tr><th></th><td>Darstellungsbedingung</td><td>Immer anzeigen</td></tr>
      </tbody>
    </table>
    <div class="sbar"><svg><use href="#up"/></svg><i class="thumb-h" style="height:9px"></i><svg class="mt-auto"><use href="#dn"/></svg></div>
  </div>
  <div class="fw-bold heavy" style="height:32px;padding-left:2px">Entwurf</div>
</aside>

<section class="d-flex flex-column flex-fill">
  <div class="d-flex flex-fill">
    <div class="strip">
      <div class="tcard"><svg class="w-100" viewBox="0 0 42 60"><path d="M.5.500h41v59H.5z" fill="#fff" stroke="#999"/><path d="M1 53h40v6H1z" fill="#f4e0d2"/><path d="M1 53h40M1 20h2M1 42h2" stroke="#e0b090" stroke-width=".6"/>
        <path d="M26 2.500h2.500v3H26z" fill="#c47a45"/><path d="M29 2.500h2.500v3H29z" fill="#177a84"/><path d="M32.200 2.500h2.500v3h-2.500z" fill="#6a0df0"/><path d="M35.300 2.500h2.500v3h-2.500z" fill="#1c45dc"/>
        <path d="M26 7h12" stroke="#9aa" stroke-width=".7"/><path d="M4 10.500h16M28 10.500h10M4 20.500h6" stroke="#70aab4" stroke-width=".8"/><path d="M4 12.500h5M4 14h4M31 12h7M32 14h6M30 16h8M28 17.500h10M29 19.500h3M34 19.500h4M29 21h3M34 21h4" stroke="#bbb" stroke-width=".6"/>
        <path d="M5 25h33M5 27h8M5 31h7" stroke="#c9a890" stroke-width=".8"/><path d="M4 28.500h34M26 31h12M28 33h10" stroke="#888" stroke-width="1"/><path d="M4 29.800h34M4 33.800h34" stroke="#e3b798" stroke-width=".7"/>
        <path d="M4 36h6" stroke="#70aab4" stroke-width=".7"/><path d="M4 37.500h28M4 39h27M4 40.500h24" stroke="#999" stroke-width=".6"/><path d="M34 36.500h4v4h-4z" fill="#555"/><path d="M5 54.500h6M28 54.500h6M28 56h8" stroke="#aaa" stroke-width=".5"/></svg></div>
    </div>
    <div class="sbar pale"><svg><use href="#up"/></svg><svg class="mt-auto"><use href="#dn"/></svg></div>
    <div style="width:2px"></div>
    <div class="canvas d-flex justify-content-center flex-fill">
      <article class="paper">
        <div class="pin" style="padding-top:18px">
          <div class="brand ms-auto"><svg width="107" height="23"><use href="#mark"/></svg><b>MUSTERLOGO</b></div>
          <svg class="water" viewBox="0 0 306 90">
            <g transform="translate(-2 -1)"><g fill="#c9c9c9"><circle cx="42" cy="41" r="28"/><path d="M36 14l6-14 7 14zM54 16l14-14-3 20zM65 28l19-7-12 16zM70 39l15 6-16 5zM66 56l14 12-20-4zM56 66l8 17-16-12zM36 70l6 14 5-14zM29 67L20 82l0-19zM20 58L4 65l10-15zM14 47L1 41l13-5zM16 33L7 18l17 8zM26 21L20 4l14 11z"/></g>
            <g fill="none" stroke="#fff" stroke-width="1.700"><path d="M35 15c-4 15 4 23 14 26s16 8 15 20M15 38c15-6 25 5 26 16M41 54c8-4 20-3 27-1M41 54c-6 2-12 5-17 9"/></g></g>
            <text x="96" y="41" font-family="Open Sans, sans-serif" font-size="34" font-weight="700" fill="#b4b4b4">Sportbedarf</text>
            <text x="190" y="72" font-family="Roboto, sans-serif" font-size="30" font-weight="300" fill="#c6c6c6">Sommer</text>
          </svg>
          <div class="d-flex justify-content-between" style="margin-top:26px">
            <div><div class="teal" style="line-height:8px">Sportbedarf Sommer GmbH · Sonnenstraße 124 · 50354 Hürth</div><div style="margin-top:4px">Herr Sven Seidel<br>Fichtestraße 79<br>03046 COTTBUS</div></div>
            <div class="text-end"><div class="co">Sportbedarf Sommer GmbH</div>Christian Sommer<br>Sonnenstraße 124<br>50354 Hürth<div style="margin-top:6px">Tel: 02233/61414250<br>Fax: 02233/61414251<br>E-Mail: info@sportbedarf-sommer.de<br>Web: http://www.sportbedarf-sommer.de</div></div>
          </div>
          <div class="d-flex justify-content-between" style="margin-top:12px">
            <div class="h-inv" style="padding-top:8px">Rechnung</div>
            <div class="d-flex justify-content-between" style="width:71px"><div>Rechnungs-Nr:<br>Datum:<br>Lieferdatum:<br>Kunden-Nr:</div><div class="text-end">RE20190271<br>25.02.2019<br>25.02.2019<br>KU20160482</div></div>
          </div>
          <table class="pos position-relative" style="margin-top:17px">
            <colgroup><col style="width:24px"><col style="width:24px"><col style="width:10px"><col style="width:48px"><col><col style="width:36px"><col style="width:36px"><col style="width:46px"></colgroup>
            <thead><tr><th>Pos.</th><th class="text-center">Menge</th><th></th><th>Art.-Nr.</th><th>Bezeichnung</th><th class="text-center">MwSt.</th><th class="text-end">E.-Preis</th><th class="text-end">G.-Preis</th></tr></thead>
            <tbody>
            <tr><td>1</td><td class="text-center">1</td><td></td><td>AR20160414-006</td><td></td><td class="text-center">19,00 %</td><td class="text-end">17,99 €</td><td class="text-end">17,99 €</td></tr>
            <tr><td>2</td><td class="text-center">1</td><td></td><td>AR20160475</td><td></td><td class="text-center">19,00 %</td><td class="text-end">39,99 €</td><td class="text-end">39,99 €</td></tr>
            <tr><td>3</td><td class="text-center">1</td><td></td><td>AR20160474</td><td></td><td class="text-center">19,00 %</td><td class="text-end">39,99 €</td><td class="text-end">39,99 €</td></tr>
            <tr><td>4</td><td class="text-center">1</td><td></td><td></td><td></td><td class="text-center">19,00 %</td><td class="text-end">4,99 €</td><td class="text-end">4,99 €</td></tr>
            <tr><td>5</td><td class="text-center">1</td><td></td><td>AR20160491-UVP</td><td>Dies ist ein Attributtext</td><td class="text-center">19,00 %</td><td class="text-end">99,99 €</td><td class="text-end">99,99 €</td></tr>
            </tbody>
          </table>
          <table class="sum position-relative w-100" style="margin-top:2px">
            <colgroup><col><col style="width:44px"></colgroup>
            <tr><td>Gesamt Netto (19,00 %)</td><td>170,55 €</td></tr>
            <tr><td>zzgl. MwSt.(19,00 %)</td><td>32,40 €</td></tr>
            <tr class="fw-bold gap"><td>Rechnungsbetrag</td><td>202,95 €</td></tr>
            <tr class="last"><td>zzgl. Finanzierungskosten</td><td>202,95 €</td></tr>
            <tr class="fw-bold gap" style="border-top:2px solid #f2dfd2"><td>Zahlbetrag</td><td>202,95 €</td></tr>
          </table>
          <div class="d-flex justify-content-between position-relative" style="margin-top:9px;padding:0 1px 0 2px">
            <div><div class="teal fw-bold" style="margin-bottom:1px">Zahlung per Überweisung</div>
              <div class="pay"><div>Bitte begleichen Sie den offenen Rechnungsbetrag in Höhe von 202,95 € bis zum 11.03.2019 auf unser Konto mit</div><div>der IBAN: DE12123123123123123123 bei der Sportbedarf Sommer GmbH (BIC: HUDEHUBA) unter Angabe des</div><div>Verwendungszwecks 'Invoice RE20190271'.</div><div>Sie können den QR-GiroCode auf der rechten Seite nutzen, um die Zahlung unkompliziert über Ihre</div><div>Online-Banking-App durchzuführen.</div><div>Wir weisen darauf hin, dass die oben aufgeführten Artikel bis zur vollständigen Bezahlung in unserem Eigentum</div><div>verbleiben.</div></div></div>
            <svg id="qr" class="align-self-center mt-1" width="35" height="36" viewBox="0 0 49 50" role="img" aria-label="QR-GiroCode"><path d="M47 9V5q0-4-4-4H5Q1 1 1 5v38q0 5 4 5h38q4 0 4-4v-3" fill="none" stroke="#333" stroke-width="1.300"/><path d="M47 13v21" stroke="#555" stroke-width="1" stroke-dasharray="2 1"/></svg>
          </div>
        </div>
        <i class="foldmark" style="top:188px"></i><i class="foldmark" style="top:265px;left:5px;width:9px"></i><i class="foldmark" style="top:375px"></i>
        <div class="pin mt-auto text-end">Seite: 1</div>
        <div class="pfoot d-flex"><div style="width:213px">Ust-IdNr: 123/123/12312<br>Gläubiger-ID:</div><div>Bankverbindung<br>Hürther Bank<br>IBAN: DE12123123123123123123<br>BIC: HUDEHUBA</div></div>
      </article>
    </div>
    <div class="sbar pale" style="width:9px"><svg><use href="#up"/></svg><svg class="mt-auto"><use href="#dn"/></svg></div>
  </div>
  <nav class="dtabs d-flex align-items-stretch">
    <button class="plain" style="padding-left:23px"><svg class="ic"><use href="#lay"/></svg>Layout</button>
    <button class="plain ms-3"><svg class="ic"><use href="#sv"/></svg>Layout-Vorschau</button>
    <button class="plain on ms-1"><svg class="ic"><use href="#sva"/></svg>Vorschau</button>
  </nav>
</section>

<aside class="right d-flex flex-column flex-shrink-0">
  <div class="phead d-flex align-items-center justify-content-between"><span>Variablen/Felder</span><button class="plain" aria-label="Variablen schließen"><svg class="ic"><use href="#x"/></svg></button></div>
  <div class="find d-flex align-items-center"><input class="flex-fill" placeholder="Variablen/Felder durchsuchen" aria-label="Variablen/Felder durchsuchen"><svg class="cw"><use href="#dn"/></svg></div>
  <div class="d-flex bg-white flex-fill align-items-start">
    <ul class="tree flex-fill" style="height:155px">
      <li><i><svg class="ic"><use href="#dn"/></svg></i><svg class="ic"><use href="#foldv"/></svg><span>Variablen</span></li>
      <li><i class="v"></i><i><svg class="ic"><use href="#rt"/></svg></i><svg class="ic"><use href="#fold"/></svg><span>LL</span></li>
      <li><i class="v"></i><i><svg class="ic"><use href="#rt"/></svg></i><svg class="ic"><use href="#fold"/></svg><span>Defines</span></li>
      <li><i class="v"></i><i><svg class="ic"><use href="#rt"/></svg></i><svg class="ic"><use href="#fold"/></svg><span>Report</span></li>
      <li><i><svg class="ic"><use href="#dn"/></svg></i><svg class="ic"><use href="#foldm"/></svg><span>Versandvariablen</span></li>
      <li><i class="v"></i><i><svg class="ic"><use href="#rt"/></svg></i><svg class="ic"><use href="#fold"/></svg><span>@LLFAX</span></li>
      <li><i><svg class="ic"><use href="#dn"/></svg></i><svg class="ic"><use href="#foldf"/></svg><span>Felder</span></li>
      <li><i class="v"></i><i><svg class="ic"><use href="#rt"/></svg></i><svg class="ic"><use href="#fold"/></svg><span>LL</span></li>
      <li><i class="v"></i><i><svg class="ic"><use href="#rt"/></svg></i><svg class="ic"><use href="#fold"/></svg><span>BillOfMaterialsChildren</span></li>
      <li><i class="v"></i><i><svg class="ic"><use href="#rt"/></svg></i><svg class="ic"><use href="#fold"/></svg><span>ConfiguratorChildren</span></li>
      <li><i class="v"></i><i><svg class="ic"><use href="#rt"/></svg></i><svg class="ic"><use href="#fold"/></svg><span>InvoicePayments</span></li>
      <li><i class="v"></i><i><svg class="ic"><use href="#rt"/></svg></i><svg class="ic"><use href="#fold"/></svg><span>InvoicePosition</span></li>
      <li><i class="v"></i><i><svg class="ic"><use href="#rt"/></svg></i><svg class="ic"><use href="#fold"/></svg><span>InvoicePositionConfiguration</span></li>
      <li><i class="v"></i><i><svg class="ic"><use href="#rt"/></svg></i><svg class="ic"><use href="#fold"/></svg><span>InvoicePositionDeliveryDetails</span></li>
      <li><i class="v"></i><i><svg class="ic"><use href="#rt"/></svg></i><svg class="ic"><use href="#fold"/></svg><span>TotalsInvoice</span></li>
      <li><i><svg class="ic"><use href="#rt"/></svg></i><svg class="ic"><use href="#foldu"/></svg><span>Benutzervariablen</span></li>
      <li><i class="e"></i><svg class="ic"><use href="#foldv"/></svg><span>Summenvariablen</span></li>
    </ul>
    <button class="plain" style="padding-right:2px" aria-label="Filter"><svg class="ic"><use href="#fil"/></svg></button>
  </div>
</aside>
</main>

<footer class="status d-flex align-items-center">
  <span style="width:127px;padding-left:11px">45.95, 300.23</span><span>Bild&nbsp; -&nbsp; 18.61 mm, 111.13 mm&nbsp; -&nbsp; 189.90 mm, 169.60 mm&nbsp; =&nbsp; 171.29 mm, 58.47 mm (Basis)</span>
  <div class="ms-auto d-flex align-items-center gap-2" style="padding-right:11px"><span>100%</span><button class="plain" aria-label="Verkleinern"><svg class="ic"><use href="#zm"/></svg></button><input class="zoomer" type="range" aria-label="Zoom"><button class="plain" aria-label="Vergrößern"><svg class="ic"><use href="#zp"/></svg></button></div>
</footer>
<script src="https://cdn.jsdelivr.net/npm/bootstrap@5.3.0/dist/js/bootstrap.bundle.min.js"></script>
<script>
// QR modules: three finder squares plus a pseudo-random data area
(function () {
  var n = 37, o = 5, d = "", s = 7;
  function finder(r, c) {
    var f = [[0, 0], [0, n - 7], [n - 7, 0]];
    for (var k = 0; k < 3; k++) {
      var y = r - f[k][0], x = c - f[k][1];
      if (y >= -1 && y <= 7 && x >= -1 && x <= 7) {
        var m = Math.max(Math.abs(y - 3), Math.abs(x - 3));
        return m === 3 || m <= 1 ? 1 : 0;
      }
    }
    return -1;
  }
  for (var r = 0; r < n; r++) for (var c = 0; c < n; c++) {
    s = (s * 1103515245 + 12345) % 2147483648;
    var v = finder(r, c);
    if (v === 1 || (v < 0 && (s >> 12) % 20 < 11)) d += "M" + (c + o) + " " + (r + o + 1) + "h1v1h-1z";
  }
  var p = document.createElementNS("http://www.w3.org/2000/svg", "path");
  p.setAttribute("d", d); p.setAttribute("fill", "#111");
  document.getElementById("qr").appendChild(p);
})();
</script>
</body>
</html>
